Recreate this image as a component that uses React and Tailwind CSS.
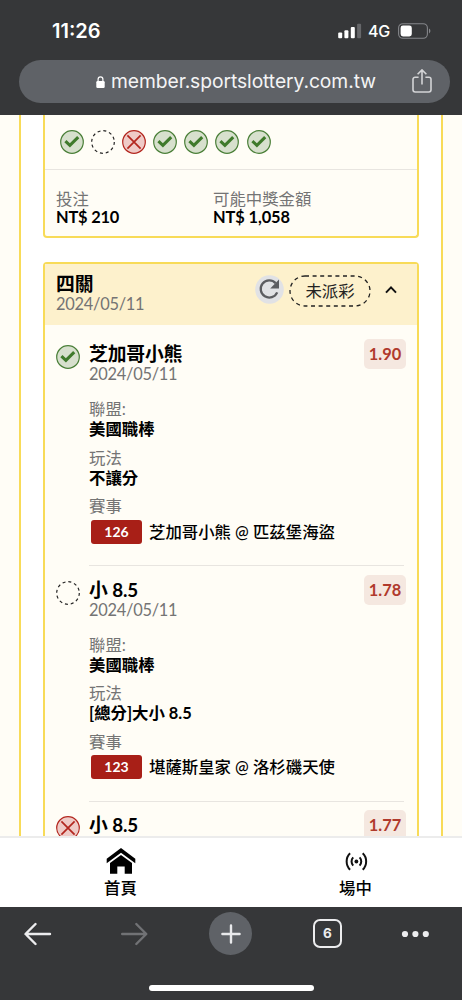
const BETS = [
  {
    status: 'win',
    pick: '芝加哥小熊',
    date: '2024/05/11',
    odds: '1.90',
    details: { league: '美國職棒', play: '不讓分', code: '126', match: '芝加哥小熊 @ 匹茲堡海盜' },
  },
  {
    status: 'pending',
    pick: '小 8.5',
    date: '2024/05/11',
    odds: '1.78',
    details: { league: '美國職棒', play: '[總分]大小 8.5', code: '123', match: '堪薩斯皇家 @ 洛杉磯天使' },
  },
  {
    status: 'lose',
    pick: '小 8.5',
    odds: '1.77',
  },
];

const RESULTS = ['win', 'pending', 'lose', 'win', 'win', 'win', 'win'];

function StatusIcon({ status }) {
  if (status === 'pending') {
    return (
      <svg className="w-6 h-6 shrink-0" viewBox="0 0 24 24" fill="none">
        <circle cx="12" cy="12" r="11.3" stroke="#222" strokeWidth="1.2" strokeDasharray="3 2.917" />
      </svg>
    );
  }
  if (status === 'lose') {
    return (
      <svg className="w-6 h-6 shrink-0" viewBox="0 0 24 24" fill="none">
        <circle cx="12" cy="12" r="11.3" fill="#efcbc7" stroke="#b3261e" strokeWidth="1.2" />
        <path d="M5.4 5.4l13.2 13.2M18.6 5.4L5.4 18.6" stroke="#b3261e" strokeWidth="1.7" />
      </svg>
    );
  }
  return (
    <svg className="w-6 h-6 shrink-0" viewBox="0 0 24 24" fill="none">
      <circle cx="12" cy="12" r="11.3" fill="#d7e0cd" stroke="#4a7f38" strokeWidth="1.2" />
      <path d="M5.4 11.2l4.5 4.1 8.3-8.1" stroke="#3f7a2b" strokeWidth="3.1" />
    </svg>
  );
}

function StatusBar() {
  return (
    <div className="flex items-center h-[60px] pl-[52px] pr-[31px] pt-0.5 text-white">
      <span className="text-[20px] font-semibold font-['Inter',sans-serif]">11:26</span>
      <svg className="ml-auto w-6 h-4" viewBox="0 0 24 16" fill="#fff">
        <rect x="0.2" y="9.6" width="4" height="5.6" rx="1" />
        <rect x="6.4" y="7.2" width="4" height="8" rx="1" />
        <rect x="12.8" y="4" width="4" height="11.2" rx="1" />
        <rect x="19.1" y="0.8" width="4" height="14.4" rx="1" fill="#66676a" />
      </svg>
      <span className="ml-[6px] w-[23px] text-[16px] font-medium tracking-[-0.3px] font-['Inter',sans-serif]">4G</span>
      <svg className="ml-[7px] w-[33px] h-4" viewBox="0 0 33 16" fill="none">
        <rect x="0.6" y="0.7" width="28.8" height="14.6" rx="4.2" stroke="#85868a" strokeWidth="1.1" />
        <rect x="2.6" y="2.6" width="11.2" height="10.8" rx="2.4" fill="#fff" />
        <path d="M31 5.6v4.8c1.9-.9 1.9-3.9 0-4.8z" fill="#85868a" />
      </svg>
    </div>
  );
}

function AddressBar() {
  return (
    <div className="ml-[19px] flex items-center h-[43px] w-[431px] rounded-full bg-[#5f6267] pl-[77px] pr-[18px]">
      <svg className="w-[9px] h-3 mt-px" viewBox="0 0 9 12" fill="none">
        <rect x="0.3" y="5" width="8.4" height="7" rx="1.2" fill="#fff" />
        <path d="M2.1 5.5V3.3a2.4 2.4 0 014.8 0v2.2" stroke="#fff" strokeWidth="1.2" />
      </svg>
      <span className="ml-[6px] text-[19.3px] tracking-[-0.08px] text-[#f4f4f5] font-['Inter',sans-serif] whitespace-nowrap">
        member.sportslottery.com.tw
      </span>
      <svg className="ml-auto -mt-0.5 w-5 h-6" viewBox="0 0 20 24" fill="none" stroke="#d3d4d6" strokeWidth="1.6">
        <path d="M6.6 8.2H3.2A2.1 2.1 0 001 10.3v10.5A2.2 2.2 0 003.2 23h13.6a2.2 2.2 0 002.2-2.2V10.3a2.1 2.1 0 00-2.1-2.1h-3.5" />
        <path d="M10 15.6V1M5.6 5.3L10 .9l4.4 4.4" />
      </svg>
    </div>
  );
}

function Field({ label, value }) {
  return (
    <div className="mb-[8.5px]">
      <div className="h-5 text-[#747474]">{label}</div>
      <div className="h-5 font-bold text-black">{value}</div>
    </div>
  );
}

function BetDetails({ details }) {
  return (
    <div className="mt-[15px]">
      <Field label="聯盟:" value={details.league} />
      <Field label="玩法" value={details.play} />
      <div className="h-5 text-[#747474]">賽事</div>
      <div className="mt-[3px] flex h-[25px] items-center pl-0.5">
        <span className="flex h-6 w-[51px] items-center justify-center rounded-[3px] bg-[#a81f17] text-[14px] font-bold text-white">
          {details.code}
        </span>
        <span className="ml-[7px] whitespace-nowrap font-medium text-black">{details.match}</span>
      </div>
      <div className="mt-[21px] mb-[13.5px] h-px bg-[#e8e5e0]" />
    </div>
  );
}

function BetItem({ bet }) {
  return (
    <div className="flex pl-[10.5px]">
      <div className="pt-px">
        <StatusIcon status={bet.status} />
      </div>
      <div className="ml-[9.5px] w-[315px]">
        <div className="flex justify-between">
          <div>
            <div className="h-5 text-[18.8px] font-bold tracking-[-0.1px] text-black">{bet.pick}</div>
            {bet.date && <div className="h-5 tracking-[-0.25px] text-[#747474]">{bet.date}</div>}
          </div>
          <div className="-mt-[5px] -mr-0.5 flex h-[30px] w-[42px] items-center justify-center rounded-[5px] bg-[#f5e8e0] font-bold text-[#b03a2c]">
            {bet.odds}
          </div>
        </div>
        {bet.details && <BetDetails details={bet.details} />}
      </div>
    </div>
  );
}

function SummaryCard() {
  return (
    <div className="h-[123px] shrink-0 rounded-b-[4px] border-2 border-t-0 border-[#f8db58] bg-[#fffdf6]">
      <div className="flex h-[55px] items-center gap-[7.2px] border-b border-[#e8e5e0] pl-[14.5px]">
        {RESULTS.map((status, i) => (
          <StatusIcon key={i} status={status} />
        ))}
      </div>
      <div className="flex pl-[11px] pt-5 leading-[18px]">
        <div className="w-[157px]">
          <div className="h-[18px] text-[#747474]">投注</div>
          <div className="font-bold tracking-[-0.2px] text-black">NT$ 210</div>
        </div>
        <div>
          <div className="h-[18px] text-[#747474]">可能中獎金額</div>
          <div className="font-bold tracking-[-0.1px] text-black">NT$ 1,058</div>
        </div>
      </div>
    </div>
  );
}

function ParlayCard() {
  return (
    <div className="mt-6 shrink-0 rounded-[4px] border-2 border-[#f8db58] bg-[#fffdf6]">
      <div className="flex h-[61px] items-center bg-[#fdf1cc] pl-[11px] pr-5">
        <div className="pb-0.5">
          <div className="h-5 text-[18.8px] font-bold text-black">四關</div>
          <div className="h-5 tracking-[-0.25px] text-[#747474]">2024/05/11</div>
        </div>
        <svg className="ml-auto mb-[10px] w-[29px] h-[29px]" viewBox="0 0 29 29" fill="none">
          <circle cx="14.5" cy="14.5" r="14.3" fill="#e1e2e5" />
          <path d="M22.2 17.4A8.6 8.6 0 1120.6 8.1" stroke="#5c5d61" strokeWidth="2.3" />
          <path d="M24 4.6v9h-8.8z" fill="#5c5d61" />
        </svg>
        <div className="relative ml-[5px] mb-2 flex h-8 w-[82px] items-center justify-center text-[#222]">
          <svg className="absolute inset-0 w-full h-full" viewBox="0 0 82 32" fill="none">
            <rect x="1" y="1" width="80" height="30" rx="15" stroke="#222" strokeWidth="1.3" strokeDasharray="4 3.6" />
          </svg>
          <span>未派彩</span>
        </div>
        <svg className="ml-[14px] mb-[10px] w-3 h-3" viewBox="0 0 12 12" fill="none">
          <path d="M1 8.6L6 3.4l5 5.2" stroke="#111" strokeWidth="2" />
        </svg>
      </div>
      <div className="pt-[19px]">
        {BETS.map((bet) => (
          <BetItem key={bet.odds} bet={bet} />
        ))}
      </div>
    </div>
  );
}

function TabBar() {
  return (
    <nav className="grid h-[71px] grid-cols-2 border-t-2 border-[#ececec] bg-white text-[16.4px] font-medium text-black">
      <div className="flex flex-col items-center pt-[10px] pl-[10px]">
        <svg className="w-[30px] h-[27px]" viewBox="0 0 30 27" fill="#000">
          <path d="M15 0L29.3 10.8v4.4L15 4.7.7 15.2v-4.4z" />
          <path d="M15 6.9l11 8.2v10.6h-7.3v-7.2h-7.4v7.2H4V15.1z" />
        </svg>
        <span className="mt-[3px] leading-5">首頁</span>
      </div>
      <div className="flex flex-col items-center pt-[10px] pl-[18px]">
        <svg className="w-6 h-[27px]" viewBox="0 0 24 27" fill="none" stroke="#111" strokeWidth="2">
          <circle cx="12.4" cy="13.5" r="1.9" fill="#111" stroke="none" />
          <path d="M9.2 9.4c-2.2 2.3-2.2 5.9 0 8.2M15.6 9.4c2.2 2.3 2.2 5.9 0 8.2" />
          <path d="M6.1 5.3c-4.6 4.4-4.6 12 0 16.4M18.7 5.3c4.6 4.4 4.6 12 0 16.4" />
        </svg>
        <span className="mt-[3px] leading-5">場中</span>
      </div>
    </nav>
  );
}

function BrowserToolbar() {
  return (
    <div className="flex h-[93px] flex-col items-center bg-[#363739]">
      <div className="flex w-full items-center pl-[23.5px] pt-[5px]">
        <svg className="w-7 h-6" viewBox="0 0 28 24" fill="none" stroke="#ececee" strokeWidth="2.4" strokeLinecap="round" strokeLinejoin="round">
          <path d="M26 12H1.8M11.5 2L1.5 12l10 10" />
        </svg>
        <svg className="ml-[68.5px] w-7 h-6" viewBox="0 0 28 24" fill="none" stroke="#717275" strokeWidth="2.4" strokeLinecap="round" strokeLinejoin="round">
          <path d="M2.2 12h23.8M16.3 2l10 10-10 10" />
        </svg>
        <div className="ml-[61px] flex h-[43px] w-[43px] items-center justify-center rounded-full bg-[#5f6267]">
          <svg className="w-5 h-5" viewBox="0 0 20 20" stroke="#e8e9eb" strokeWidth="2.4" strokeLinecap="round">
            <path d="M10 1.4v17.2M1.4 10h17.2" />
          </svg>
        </div>
        <div className="ml-[61px] flex h-[29px] w-[29px] items-center justify-center rounded-[7px] border-2 border-[#ececee] text-[13.5px] font-bold text-[#ececee] font-['Inter',sans-serif]">
          6
        </div>
        <svg className="ml-[59px] w-7 h-7" viewBox="0 0 28 28" fill="#ececee">
          <circle cx="4" cy="14" r="3.1" />
          <circle cx="14.4" cy="14" r="3.1" />
          <circle cx="24.8" cy="14" r="3.1" />
        </svg>
      </div>
      <div className="mt-auto mb-[9px] h-[6px] w-[165px] rounded-full bg-white" />
    </div>
  );
}

export default function App() {
  return (
    <div className="flex h-[1000px] w-[462px] flex-col overflow-hidden bg-[#fffdf6]">
      <header className="h-[115px] shrink-0 bg-[#363739]">
        <StatusBar />
        <AddressBar />
      </header>
      <main className="h-[721px] shrink-0 overflow-hidden px-[19px] text-[16.4px] leading-5 font-['Lato','Noto_Sans_CJK_TC',sans-serif]">
        <div className="flex h-full flex-col border-x-2 border-[#f8db58] bg-white px-[22px]">
          <SummaryCard />
          <ParlayCard />
        </div>
      </main>
      <div className="shrink-0 font-['Lato','Noto_Sans_CJK_TC',sans-serif]">
        <TabBar />
        <BrowserToolbar />
      </div>
    </div>
  );
}
